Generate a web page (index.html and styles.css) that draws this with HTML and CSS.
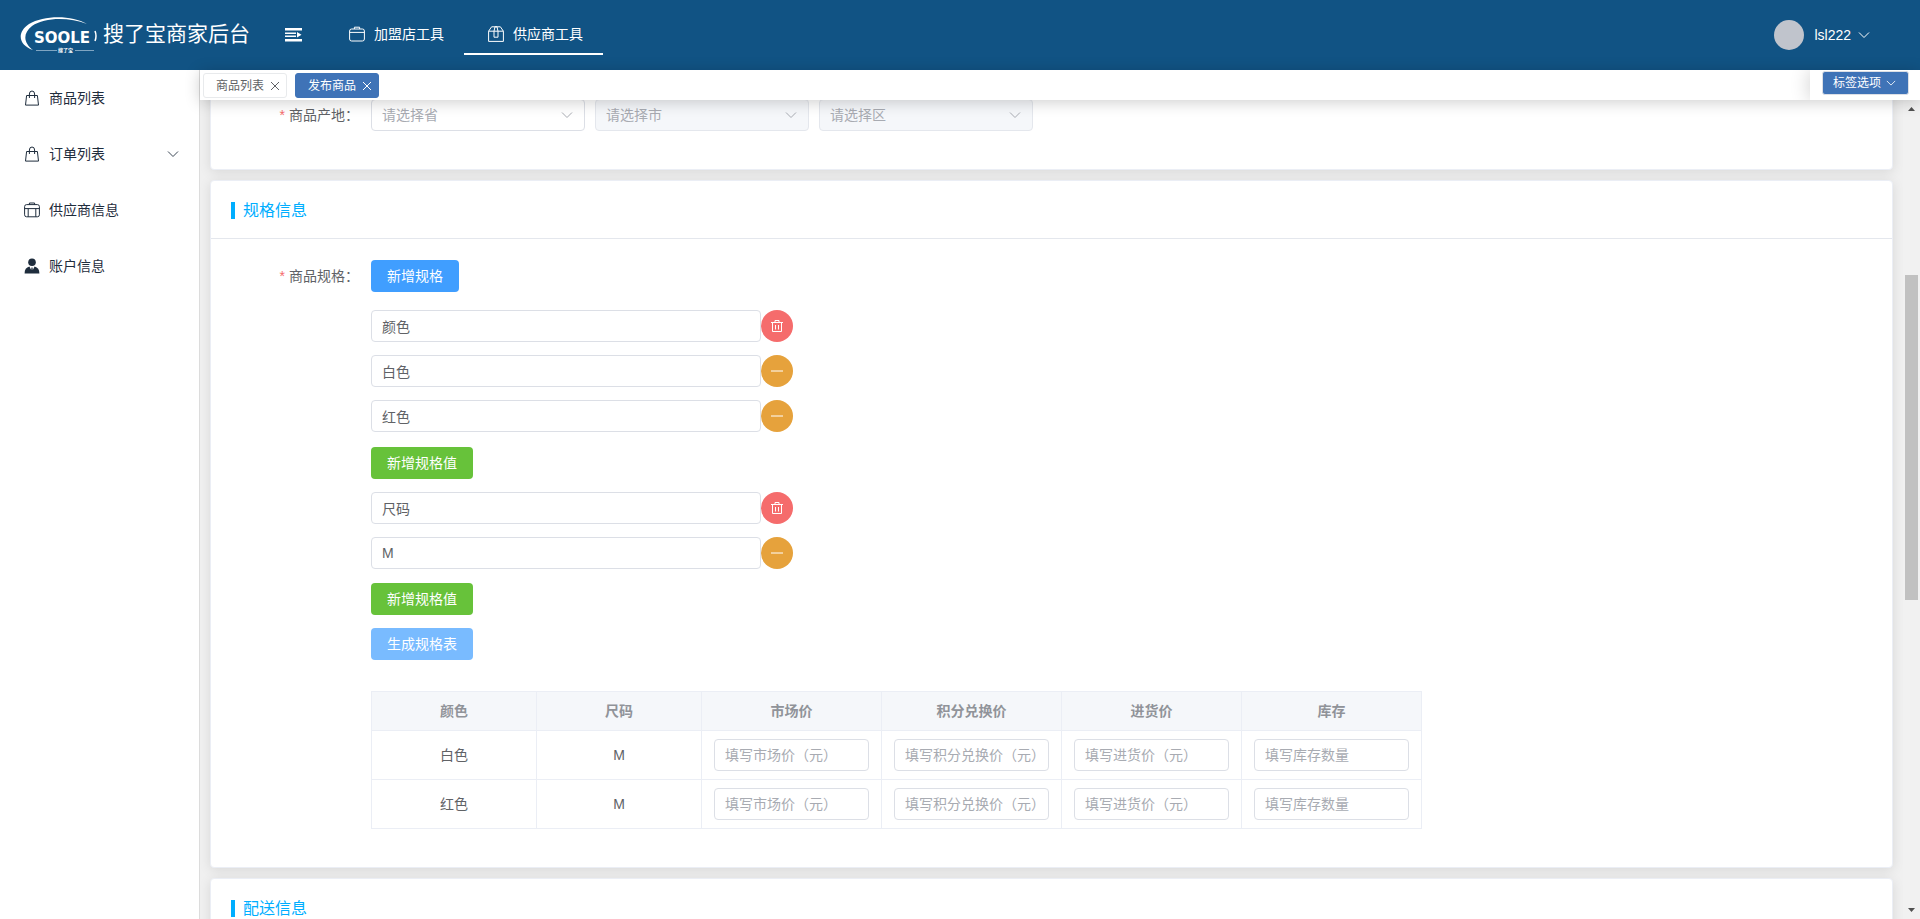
FILE: index.html
```html
<!DOCTYPE html>
<html lang="zh-CN">
<head>
<meta charset="utf-8">
<title>搜了宝商家后台</title>
<link rel="stylesheet" href="styles.css">
</head>
<body>
<svg class="defs" aria-hidden="true">
  <symbol id="i-bag" viewBox="0 0 16 16"><path d="M2.6 5.5h10.8l1.1 9.6h-13zM5.4 8V4a2.6 3 0 0 1 5.2 0v4"/></symbol>
  <symbol id="i-case" viewBox="0 0 16 16"><rect x=".6" y="3" width="14.8" height="12" rx="2"/><path d="M.6 6.4h14.8M5.4 3V1.2h5.2V3"/></symbol>
  <symbol id="i-case-bars" viewBox="0 0 16 16"><rect x=".6" y="2.6" width="14.8" height="12.2" rx="2"/><path d="M.6 6.6h14.8M4.2 6.6v8.2M11.8 6.6v8.2M5.4 2.6V1h5.2v1.6"/></symbol>
  <symbol id="i-box" viewBox="0 0 16 16"><path d="M.6 5.2V15.4h14.8V5.2zM.6 5.2 3.6.8h8.8l3 4.4M6 5.2 7 .8h2l1 4.4v6H6z"/></symbol>
  <symbol id="i-user" viewBox="0 0 16 16"><g fill="currentColor" stroke="none"><circle cx="8" cy="4.3" r="3.8"/><path d="M.6 15.4c0-3.8 1.6-5.8 4.8-6.8L7.200 12 7.500 9.400h1L8.800 12l1.800-3.400c3.200 1 4.800 3 4.800 6.800z"/></g></symbol>
  <symbol id="i-down" viewBox="0 0 12 12"><path d="M1 3.500l5 5 5-5"/></symbol>
  <symbol id="i-close" viewBox="0 0 12 12"><path d="M2 2l8 8M10 2l-8 8"/></symbol>
  <symbol id="i-trash" viewBox="0 0 14 14"><path d="M1 3.500h12M2.500 3.500v9h9v-9M5 3.500v-2h4v2M5.500 6v4.500M8.500 6v4.500"/></symbol>
  <symbol id="i-minus" viewBox="0 0 14 14"><path d="M1 7h12"/></symbol>
</svg>

<header class="topbar">
  <a class="brand" href="#">
    <svg class="logo" viewBox="0 0 78 38" aria-hidden="true">
      <path d="M67 8C52-1 24-1 9 8-4 17-1 29 13 34 4 27 2 18 12 10 25 1 49 1 67 8z" fill="#fff"/>
      <text x="14" y="27" class="logo-name">SOOLE</text>
      <path d="M75 15q2 5 0 10" fill="none" stroke="#fff" stroke-width="1.500"/>
      <path d="M16 34.500h21M55 34.500h19" stroke="#7fa5c2" stroke-width="1"/>
      <text x="38" y="36" class="logo-sub">搜了宝</text>
    </svg>
    <span class="brand-name">搜了宝商家后台</span>
  </a>
  <button class="fold" aria-label="折叠菜单">
    <svg viewBox="0 0 17 14"><path d="M0 0h17v2.500H0zM0 4.500h11v1.500H0zM0 7.500h11V9H0zM0 11h17v2.500H0zM12 4l4.500 2.800L12 9.500z" fill="currentColor"/></svg>
  </button>
  <nav class="topnav">
    <a href="#"><svg class="icon"><use href="#i-case"/></svg>加盟店工具</a>
    <a href="#" class="active"><svg class="icon"><use href="#i-box"/></svg>供应商工具</a>
  </nav>
  <button class="account"><span class="avatar"></span>lsl222<svg class="chevron"><use href="#i-down"/></svg></button>
</header>

<div class="layout">
  <nav class="sidebar">
    <a href="#"><svg class="icon"><use href="#i-bag"/></svg>商品列表</a>
    <a href="#"><svg class="icon"><use href="#i-bag"/></svg>订单列表<svg class="chevron"><use href="#i-down"/></svg></a>
    <a href="#"><svg class="icon"><use href="#i-case-bars"/></svg>供应商信息</a>
    <a href="#"><svg class="icon"><use href="#i-user"/></svg>账户信息</a>
  </nav>

  <div class="workspace">
    <div class="tabs">
      <div class="tab-list">
        <button class="tab">商品列表<svg><use href="#i-close"/></svg></button>
        <button class="tab current">发布商品<svg><use href="#i-close"/></svg></button>
      </div>
      <div class="tab-tools"><button class="tab-menu">标签选项<svg><use href="#i-down"/></svg></button></div>
    </div>

    <div class="viewport">
      <main class="content">
        <section class="card origin">
          <div class="row">
            <label class="label" for="province">商品产地：</label>
            <div class="selects">
              <span class="select"><select id="province"><option>请选择省</option></select><svg class="chevron"><use href="#i-down"/></svg></span>
              <span class="select"><select aria-label="市" disabled><option>请选择市</option></select><svg class="chevron"><use href="#i-down"/></svg></span>
              <span class="select"><select aria-label="区" disabled><option>请选择区</option></select><svg class="chevron"><use href="#i-down"/></svg></span>
            </div>
          </div>
        </section>

        <section class="card">
          <h2 class="card-title">规格信息</h2>
          <div class="row spec">
            <span class="label">商品规格：</span>
            <div class="fields">
              <button class="btn primary">新增规格</button>
              <div class="group first">
                <div class="field"><input class="input" aria-label="规格名" value="颜色"><button class="round danger" aria-label="删除"><svg><use href="#i-trash"/></svg></button></div>
                <div class="field"><input class="input" aria-label="规格值" value="白色"><button class="round warning" aria-label="移除"><svg><use href="#i-minus"/></svg></button></div>
                <div class="field"><input class="input" aria-label="规格值" value="红色"><button class="round warning" aria-label="移除"><svg><use href="#i-minus"/></svg></button></div>
                <button class="btn success">新增规格值</button>
              </div>
              <div class="group">
                <div class="field"><input class="input" aria-label="规格名" value="尺码"><button class="round danger" aria-label="删除"><svg><use href="#i-trash"/></svg></button></div>
                <div class="field"><input class="input" aria-label="规格值" value="M"><button class="round warning" aria-label="移除"><svg><use href="#i-minus"/></svg></button></div>
                <button class="btn success">新增规格值</button>
              </div>
              <button class="btn pale">生成规格表</button>
              <table class="sku">
                <colgroup><col class="narrow"><col class="narrow"><col><col><col><col></colgroup>
                <thead><tr><th>颜色</th><th>尺码</th><th>市场价</th><th>积分兑换价</th><th>进货价</th><th>库存</th></tr></thead>
                <tbody>
                  <tr><td>白色</td><td>M</td><td><input class="input" aria-label="市场价" placeholder="填写市场价（元）"></td><td><input class="input" aria-label="积分兑换价" placeholder="填写积分兑换价（元）"></td><td><input class="input" aria-label="进货价" placeholder="填写进货价（元）"></td><td><input class="input" aria-label="库存" placeholder="填写库存数量"></td></tr>
                  <tr><td>红色</td><td>M</td><td><input class="input" aria-label="市场价" placeholder="填写市场价（元）"></td><td><input class="input" aria-label="积分兑换价" placeholder="填写积分兑换价（元）"></td><td><input class="input" aria-label="进货价" placeholder="填写进货价（元）"></td><td><input class="input" aria-label="库存" placeholder="填写库存数量"></td></tr>
                </tbody>
              </table>
            </div>
          </div>
        </section>

        <section class="card">
          <h2 class="card-title">配送信息</h2>
        </section>
      </main>
      <div class="scrollbar" aria-hidden="true">
        <svg viewBox="0 0 17 17"><path d="M5 11h7L8.500 7z"/></svg>
        <div class="track"><div class="thumb"></div></div>
        <svg viewBox="0 0 17 17"><path d="M5 6h7l-3.500 4z"/></svg>
      </div>
    </div>
  </div>
</div>
</body>
</html>
```
FILE: styles.css
```css
* { box-sizing: border-box; }
body {
  margin: 0;
  height: 100vh;
  display: flex;
  flex-direction: column;
  overflow: hidden;
  font: 14px/20px "Liberation Sans", "Noto Sans CJK SC", sans-serif;
  color: #606266;
  background: #f0f0f0;
}
button, input, select { font: inherit; color: inherit; margin: 0; }
button { cursor: pointer; border: 0; background: none; padding: 0; }
a { color: inherit; text-decoration: none; }
svg { fill: none; stroke: currentColor; flex: none; }
.defs { display: none; }
.icon { width: 16px; height: 16px; margin: 0 9px 0 4px; }
.chevron { width: 12px; height: 12px; }

/* Header */
.topbar {
  flex: none;
  height: 70px;
  display: flex;
  align-items: center;
  padding: 0 50px 0 20px;
  background: #115384;
  color: #fff;
}
.brand { display: flex; align-items: center; gap: 5px; }
.logo { width: 78px; height: 38px; stroke: none; }
.logo-name { font: 700 15px "DejaVu Sans", sans-serif; fill: #fff; }
.logo-sub { font: 700 5px "Noto Sans CJK SC", sans-serif; fill: #fff; }
.brand-name { font-size: 21px; line-height: 30px; padding-bottom: 2px; }
.fold { margin-left: 35px; height: 14px; }
.fold svg { display: block; width: 17px; height: 14px; stroke: none; }
.topnav { display: flex; margin-left: 23px; }
.topnav a {
  height: 40px;
  display: flex;
  align-items: center;
  padding: 0 20px;
  border-bottom: 2px solid transparent;
}
.topnav .active { border-color: #fff; }
.account { display: flex; align-items: center; margin-left: auto; }
.avatar { width: 30px; height: 30px; margin-right: 10px; border-radius: 50%; background: #c0c4cc; }
.account .chevron { margin-left: 7px; }

/* Sidebar */
.layout { flex: 1; min-height: 0; display: flex; }
.sidebar {
  flex: none;
  width: 200px;
  background: #fff;
  border-right: 1px solid #dcdcdc;
  color: #1f2d3d;
}
.sidebar a { height: 56px; display: flex; align-items: center; padding: 0 20px; }
.sidebar .chevron { margin-left: auto; color: #3c4856; }
.workspace { flex: 1; min-width: 0; display: flex; flex-direction: column; }

/* Tabs */
.tabs {
  flex: none;
  height: 30px;
  display: flex;
  background: #fff;
  box-shadow: 0 2px 16px rgba(0, 0, 0, .2);
  position: relative;
  z-index: 1;
  font-size: 12px;
}
.tab-list { flex: 1; display: flex; gap: 8px; padding: 3px; overflow: hidden; }
.tab {
  display: flex;
  align-items: center;
  gap: 5px;
  height: 25px;
  padding: 0 4px 0 12px;
  width: 84px;
  border: 1px solid #e8eaec;
  border-radius: 3px;
  background: #fff;
}
.tab svg { width: 12px; height: 12px; }
.tab.current { background: #3f73b7; border-color: #3f73b7; color: #fff; }
.tab-tools {
  width: 110px;
  padding: 1px 11px 0 12px;
  background: #fff;
  box-shadow: 0 0 20px rgba(0, 0, 0, .2);
  clip-path: inset(0 0 0 -20px);
}
.tab-menu {
  width: 100%;
  height: 24px;
  display: flex;
  align-items: center;
  justify-content: space-between;
  padding: 0 12px 0 10px;
  border: 1px solid #dcdfe6;
  border-radius: 3px;
  background: #3f73b7;
  color: #fff;
}
.tab-menu svg { width: 10px; height: 10px; }

/* Scrolling page */
.viewport { flex: 1; min-height: 0; display: flex; overflow: hidden; }
.content { flex: 1; min-width: 0; padding: 0 10px; overflow: hidden; }
.scrollbar { flex: none; width: 17px; display: flex; flex-direction: column; background: #f1f1f1; }
.scrollbar svg { width: 17px; height: 17px; fill: #505050; stroke: none; }
.track { flex: 1; display: flex; justify-content: center; padding-top: 158px; }
.thumb { width: 13px; height: 325px; background: #c1c1c1; }

.card {
  margin-bottom: 10px;
  background: #fff;
  border: 1px solid #ebeef5;
  border-radius: 4px;
  box-shadow: 0 2px 12px rgba(0, 0, 0, .1);
}
.origin { margin-top: -22px; padding-bottom: 38px; }
.card-title {
  display: flex;
  align-items: center;
  gap: 8px;
  height: 58px;
  margin: 0;
  padding: 2px 20px 0;
  border-bottom: 1px solid #e4e7ed;
  font-size: 16px;
  font-weight: 400;
  color: #00aeff;
}
.card-title::before { content: ""; width: 4px; height: 17px; background: #00aeff; }
.row { display: flex; padding: 20px 20px 0; }
.row.spec { padding: 21px 20px 38px; }
.label { width: 140px; flex: none; padding-right: 12px; text-align: right; line-height: 32px; }
.label::before { content: "*"; margin-right: 4px; color: #f56c6c; }

.selects { display: flex; gap: 10px; }
.select { display: flex; align-items: center; position: relative; width: 214px; }
.select select {
  appearance: none;
  width: 100%;
  height: 32px;
  padding: 0 30px 0 10px;
  border: 1px solid #dcdfe6;
  border-radius: 4px;
  background: #fff;
  color: #a8abb2;
  opacity: 1;
}
.select select:disabled { background: #f5f7fa; border-color: #e4e7ed; }
.select .chevron { position: absolute; right: 12px; color: #a8abb2; pointer-events: none; }

.fields { display: flex; flex-direction: column; align-items: flex-start; }
.group { display: flex; flex-direction: column; align-items: flex-start; gap: 13px; margin-bottom: 13px; }
.group.first { margin-top: 18px; }
.group .btn { margin-top: 1px; }
.group.first .btn { margin-top: 2px; }
.field { display: flex; }
.input {
  width: 390px;
  height: 32px;
  padding: 0 10px;
  border: 1px solid #dcdfe6;
  border-radius: 4px;
  background: #fff;
}
.input::placeholder { color: #a8abb2; opacity: 1; }
.btn { height: 32px; padding: 0 16px; border-radius: 4px; color: #fff; }
.primary { background: #409eff; }
.success { background: #67c23a; }
.pale { background: #79bbff; }
.round { width: 32px; height: 32px; display: flex; align-items: center; justify-content: center; border-radius: 50%; color: #fff; }
.round svg { width: 14px; height: 14px; }
.danger { background: #f56c6c; }
.warning { background: #e6a23c; }

.sku {
  width: 1051px;
  margin-top: 31px;
  table-layout: fixed;
  border-collapse: collapse;
  text-align: center;
}
.sku col { width: 180px; }
.sku .narrow { width: 165px; }
.sku th, .sku td { border: 1px solid #ebeef5; padding: 8px 12px; }
.sku th { height: 39px; padding: 0; background: #f5f7fa; color: #909399; }
.sku .input { display: block; width: 100%; }
```
